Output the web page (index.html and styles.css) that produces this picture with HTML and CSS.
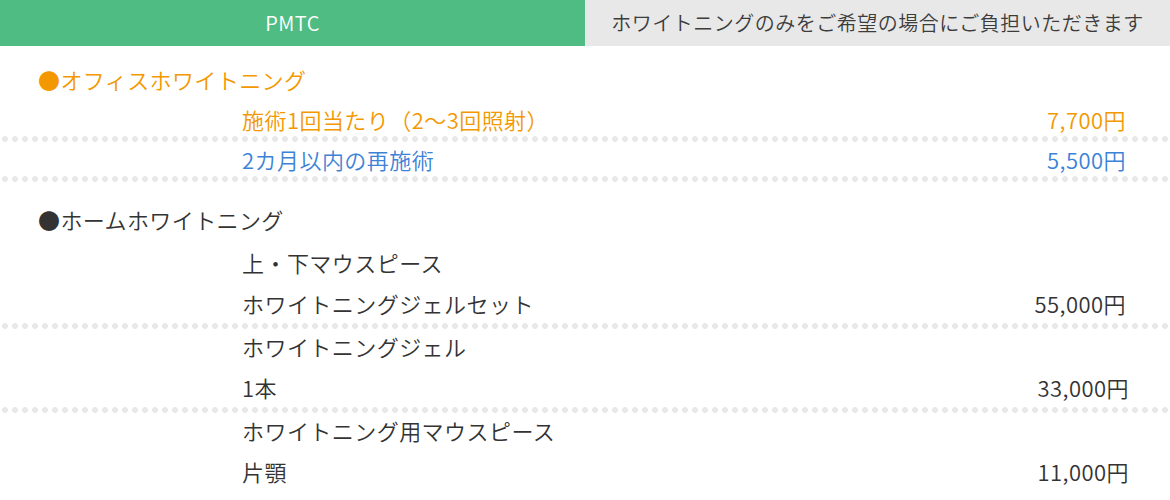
FILE: index.html
```html
<!DOCTYPE html>
<html lang="ja">
<head>
<meta charset="utf-8">
<title>PMTC</title>
<link rel="stylesheet" href="styles.css">
</head>
<body>
<div class="tabs">
  <div class="tab tab-active">PMTC</div>
  <div class="tab tab-note">ホワイトニングのみをご希望の場合にご負担いただきます</div>
</div>
<div class="content">
  <section class="group group-office">
    <h2 class="group-title">●オフィスホワイトニング</h2>
    <div class="item item-orange">
      <div class="item-name"><p>施術1回当たり（2〜3回照射）</p></div>
      <div class="item-price">7,700円</div>
    </div>
    <div class="sep"></div>
    <div class="item item-blue">
      <div class="item-name"><p>2カ月以内の再施術</p></div>
      <div class="item-price">5,500円</div>
    </div>
    <div class="sep"></div>
  </section>
  <section class="group group-home">
    <h2 class="group-title">●ホームホワイトニング</h2>
    <div class="item">
      <div class="item-name"><p>上・下マウスピース</p><p>ホワイトニングジェルセット</p></div>
      <div class="item-price">55,000円</div>
    </div>
    <div class="sep"></div>
    <div class="item item-wide">
      <div class="item-name"><p>ホワイトニングジェル</p><p>1本</p></div>
      <div class="item-price">33,000円</div>
    </div>
    <div class="sep"></div>
    <div class="item item-wide">
      <div class="item-name"><p>ホワイトニング用マウスピース</p><p>片顎</p></div>
      <div class="item-price">11,000円</div>
    </div>
  </section>
</div>
</body>
</html>
```

FILE: styles.css
```css
* { box-sizing: border-box; }
html, body { margin: 0; padding: 0; background: #fff; }
body {
  font-family: "Noto Sans CJK JP", "Noto Sans", sans-serif;
  font-weight: 350;
  color: #333;
  width: 1170px;
  height: 500px;
  overflow: hidden;
}
.tabs { display: flex; height: 46px; }
.tab {
  display: flex;
  align-items: center;
  justify-content: center;
  font-size: 20px;
  letter-spacing: 0.5px;
  line-height: 46px;
}
.tab-active { width: 585px; background: #4fbc83; color: #fff; }
.tab-note { flex: 1; background: #e8e8e8; color: #3c3c3c; }

.content { padding-top: 13px; }
.group-title {
  margin: 0;
  padding-left: 38px;
  font-size: 22px;
  font-weight: 350;
  letter-spacing: 0.4px;
  line-height: 40px;
}
.group-office .group-title { color: #f39800; }
.group-home { margin-top: 20px; }
.group-home .group-title { color: #333; margin-bottom: 3px; }

.item {
  display: flex;
  align-items: flex-end;
  justify-content: space-between;
  padding: 0 44px 0 242px;
  font-size: 22px;
  letter-spacing: 0.45px;
  line-height: 40px;
}
.group-home .item { line-height: 41px; padding-bottom: 2px; }
.group-home .item-wide { padding-right: 41px; }
.item-name p { margin: 0; }
.item-price { text-align: right; }
.item-orange { color: #f39800; }
.item-blue { color: #3c82d6; }

.sep {
  height: 6px;
  margin: -3px 0;
  background: radial-gradient(circle at 5px 3px, #e8e8e8 2.6px, rgba(232,232,232,0) 3.2px) 0 0 / 10px 6px repeat-x;
}
```
